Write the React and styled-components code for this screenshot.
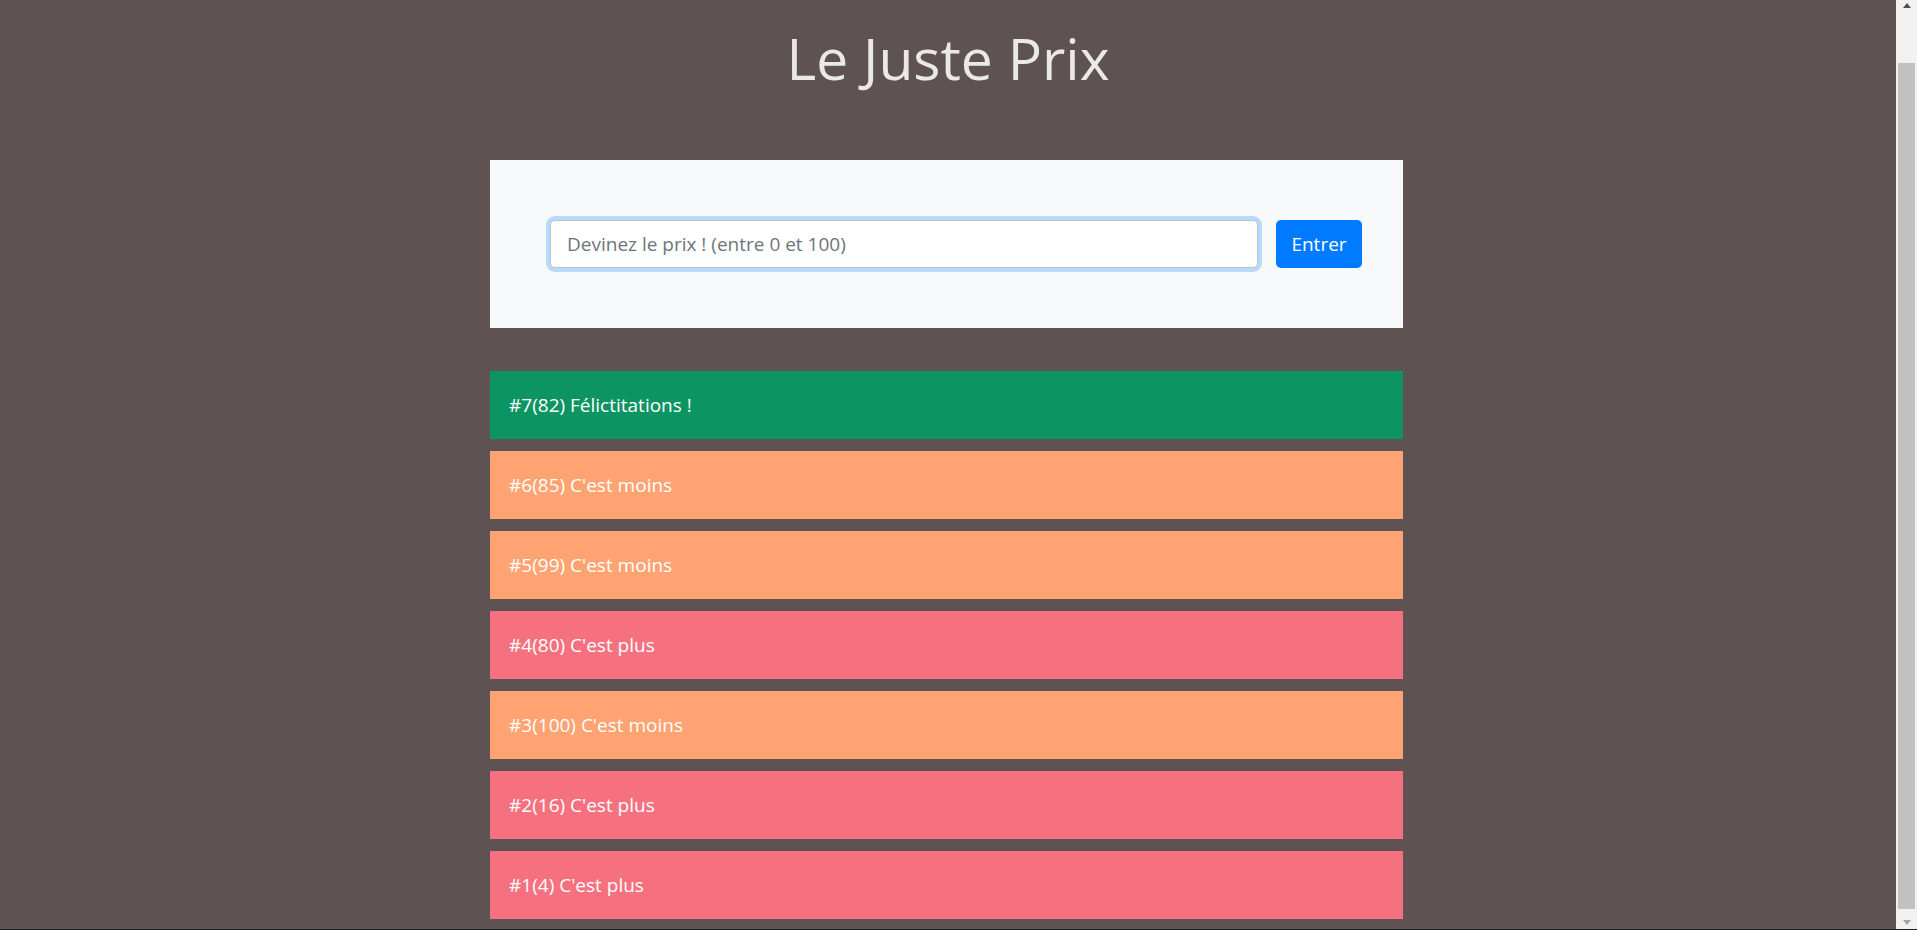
import React from "react";
import styled, { createGlobalStyle } from "styled-components";

const GlobalStyle = createGlobalStyle`
  html, body {
    margin: 0;
    height: 100%;
    overflow: hidden;
    background: #5f5252;
    font-family: "Open Sans", "Noto Sans", sans-serif;
  }
`;

const guesses = [
  { id: 7, value: 82, result: "win" },
  { id: 6, value: 85, result: "less" },
  { id: 5, value: 99, result: "less" },
  { id: 4, value: 80, result: "more" },
  { id: 3, value: 100, result: "less" },
  { id: 2, value: 16, result: "more" },
  { id: 1, value: 4, result: "more" },
];

const messages = {
  win: "Félictitations !",
  less: "C'est moins",
  more: "C'est plus",
};

const colors = {
  win: "#0d9463",
  less: "#ffa372",
  more: "#f5717f",
};

const Window = styled.div`
  display: grid;
  grid-template-columns: 1fr 21px;
  box-sizing: border-box;
  height: 100vh;
  border-bottom: 1px solid #1c1f2e;
`;

const Page = styled.div`
  overflow: hidden;
`;

const Title = styled.h1`
  margin: 0;
  padding: 29px 0 73px;
  text-align: center;
  font-size: 57px;
  font-weight: 400;
  line-height: 58px;
  color: #ebe8e8;
`;

const Column = styled.main`
  width: 913px;
  margin-left: calc(50% - 458px);
`;

const Card = styled.form`
  display: flex;
  align-items: center;
  gap: 18px;
  padding: 60px 41px 60px 60px;
  background: #f8f9fa;
`;

const Input = styled.input`
  flex: 1;
  box-sizing: border-box;
  height: 48px;
  padding: 0 16px;
  font-family: inherit;
  font-size: 19px;
  color: #495057;
  background: #fff;
  border: 1px solid #bfc4c9;
  border-radius: 5px;
  box-shadow: 0 0 0 4px #b9d9fb;
  outline: none;

  &::placeholder {
    color: #6c757d;
  }
`;

const Button = styled.button`
  box-sizing: border-box;
  width: 86px;
  height: 48px;
  padding: 0;
  font-family: inherit;
  font-size: 19px;
  color: #fff;
  background: #007bff;
  border: none;
  border-radius: 5px;
`;

const List = styled.ul`
  display: flex;
  flex-direction: column;
  gap: 12px;
  margin: 43px 0 0;
  padding: 0;
  list-style: none;
`;

const Row = styled.li`
  display: flex;
  align-items: center;
  height: 68px;
  padding: 0 19px;
  font-size: 19px;
  color: #fff;
  background: ${(p) => colors[p.$result]};
`;

const Scrollbar = styled.div`
  display: flex;
  flex-direction: column;
  align-items: center;
  padding: 0 2px;
  background: #f1f1f1;
`;

const Arrow = styled.div`
  display: flex;
  align-items: center;
  justify-content: center;
  height: 17px;
  margin-top: ${(p) => (p.$down ? "auto" : "0")};

  &::before {
    content: "";
    border-left: 4.5px solid transparent;
    border-right: 4.5px solid transparent;
    ${(p) =>
      p.$down
        ? "border-top: 5px solid #a3a3a3; margin-top: 4px;"
        : "border-bottom: 5px solid #505050; margin-top: -6px;"}
  }
`;

const Thumb = styled.div`
  align-self: stretch;
  height: 846px;
  margin-top: 46px;
  background: #c1c1c1;
`;

export default function App() {
  return (
    <>
      <GlobalStyle />
      <Window>
        <Page>
          <Title>Le Juste Prix</Title>
          <Column>
            <Card onSubmit={(e) => e.preventDefault()}>
              <Input type="text" placeholder="Devinez le prix ! (entre 0 et 100)" />
              <Button type="submit">Entrer</Button>
            </Card>
            <List>
              {guesses.map((g) => (
                <Row key={g.id} $result={g.result}>
                  #{g.id}({g.value}) {messages[g.result]}
                </Row>
              ))}
            </List>
          </Column>
        </Page>
        <Scrollbar>
          <Arrow />
          <Thumb />
          <Arrow $down />
        </Scrollbar>
      </Window>
    </>
  );
}
